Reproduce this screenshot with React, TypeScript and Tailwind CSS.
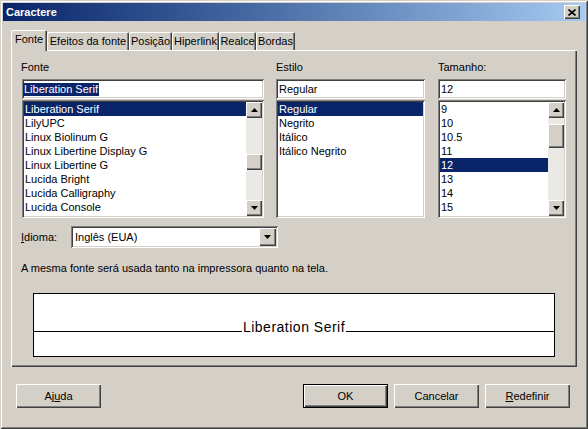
import React from "react";

const sunken =
  "shadow-[inset_1px_1px_0_#808080,inset_-1px_-1px_0_#ffffff,inset_2px_2px_0_#404040,inset_-2px_-2px_0_#d4d0c8]";
const raised =
  "shadow-[inset_1px_1px_0_#ffffff,inset_-1px_-1px_0_#404040,inset_-2px_-2px_0_#808080]";

const fonts = [
  "Liberation Serif",
  "LilyUPC",
  "Linux Biolinum G",
  "Linux Libertine Display G",
  "Linux Libertine G",
  "Lucida Bright",
  "Lucida Calligraphy",
  "Lucida Console",
];
const styles = ["Regular", "Negrito", "Itálico", "Itálico Negrito"];
const sizes = ["9", "10", "10.5", "11", "12", "13", "14", "15"];
const tabs = [
  { label: "Fonte", w: "w-[36px]" },
  { label: "Efeitos da fonte", w: "w-[82px]" },
  { label: "Posição", w: "w-[43px]" },
  { label: "Hiperlink", w: "w-[47px]" },
  { label: "Realce", w: "w-[37px]" },
  { label: "Bordas", w: "w-[39px]" },
];

function Arrow({ down }: { down?: boolean }) {
  return (
    <svg width="7" height="4" viewBox="0 0 7 4">
      <polygon points={down ? "0,0 7,0 3.5,4" : "3.5,0 7,4 0,4"} fill="#000" />
    </svg>
  );
}

function ScrollBar({ thumbTop, thumbH }: { thumbTop: number; thumbH: number }) {
  return (
    <div className="w-[16px] h-full flex flex-col bg-[#ebe9e5]">
      <div className={`h-[16px] shrink-0 bg-[#d4d0c8] flex items-center justify-center ${raised}`}>
        <Arrow />
      </div>
      <div className="flex-1">
        <div style={{ marginTop: thumbTop, height: thumbH }} className={`bg-[#d4d0c8] ${raised}`} />
      </div>
      <div className={`h-[16px] shrink-0 bg-[#d4d0c8] flex items-center justify-center ${raised}`}>
        <Arrow down />
      </div>
    </div>
  );
}

function ListBox({
  items,
  selected,
  width,
  scroll,
}: {
  items: string[];
  selected: number;
  width: string;
  scroll?: { top: number; h: number };
}) {
  return (
    <div className={`${width} h-[118px] bg-white p-[2px] flex ${sunken}`}>
      <div className="flex-1 overflow-hidden">
        {items.map((it, i) => (
          <div
            key={it}
            className={`h-[14px] leading-[14px] pl-[1px] whitespace-nowrap ${
              i === selected ? "bg-[#0a246a] text-white" : ""
            }`}
          >
            {it}
          </div>
        ))}
      </div>
      {scroll && <ScrollBar thumbTop={scroll.top} thumbH={scroll.h} />}
    </div>
  );
}

function TextBox({ width, children }: { width: string; children: React.ReactNode }) {
  return (
    <div className={`${width} h-[20px] bg-white flex items-center pl-[3px] ${sunken}`}>{children}</div>
  );
}

function Button({ children, def }: { children: React.ReactNode; def?: boolean }) {
  return (
    <div
      className={`w-[85px] h-[24px] flex items-center justify-center bg-[#d4d0c8] ${
        def ? "border border-black" : ""
      } ${raised}`}
    >
      {children}
    </div>
  );
}

export default function App() {
  return (
    <div className="w-[588px] h-[429px] bg-[#d4d0c8] p-[3px] flex flex-col text-[11px] text-black font-['Liberation_Sans',Arial,sans-serif] shadow-[inset_1px_1px_0_#d4d0c8,inset_-1px_-1px_0_#404040,inset_2px_2px_0_#ffffff,inset_-2px_-2px_0_#808080]">
      {/* title bar */}
      <div className="h-[18px] shrink-0 flex items-center pl-[3px] pr-[5px] bg-gradient-to-r from-[#0a246a] to-[#a6caf0]">
        <span className="flex-1 text-white font-bold text-[11px]">Caractere</span>
        <div className={`w-[16px] h-[14px] bg-[#d4d0c8] flex items-center justify-center ${raised}`}>
          <svg width="8" height="7" viewBox="0 0 8 7">
            <path d="M0.5 0.5 L7.5 6.5 M7.5 0.5 L0.5 6.5" stroke="#000" strokeWidth="1.6" />
          </svg>
        </div>
      </div>

      <div className="px-[8px] mt-[9px]">
        {/* tabs */}
        <div className="h-[21px] flex items-start -mb-px relative z-10">
          {tabs.map((t, i) => (
            <div
              key={t.label}
              className={`${t.w} flex items-center justify-center bg-[#d4d0c8] whitespace-nowrap rounded-t-[2px] shadow-[inset_1px_1px_0_#ffffff,inset_-1px_0_0_#404040,inset_-2px_0_0_#808080] ${
                i === 0 ? "h-[21px] pb-[2px]" : "h-[18px] mt-[2px]"
              }`}
            >
              {t.label}
            </div>
          ))}
        </div>

        {/* panel */}
        <div className={`h-[317px] pt-[9px] pl-[11px] ${raised}`}>
          <div className="flex">
            <div className="w-[242px] mr-[12px]">
              <div className="h-[14px] mb-[6px] -ml-px">Fonte</div>
              <TextBox width="w-[242px]">
                <span className="bg-[#0a246a] text-white px-px -ml-[2px] leading-[13px]">Liberation Serif</span>
              </TextBox>
              <div className="mt-px">
                <ListBox items={fonts} selected={0} width="w-[242px]" scroll={{ top: 36, h: 16 }} />
              </div>
            </div>
            <div className="w-[149px] mr-[13px]">
              <div className="h-[14px] mb-[6px]">Estilo</div>
              <TextBox width="w-[149px]">Regular</TextBox>
              <div className="mt-px">
                <ListBox items={styles} selected={0} width="w-[149px]" />
              </div>
            </div>
            <div className="w-[128px]">
              <div className="h-[14px] mb-[6px]">Tamanho:</div>
              <TextBox width="w-[128px]">12</TextBox>
              <div className="mt-px">
                <ListBox items={sizes} selected={4} width="w-[128px]" scroll={{ top: 6, h: 24 }} />
              </div>
            </div>
          </div>

          {/* language */}
          <div className="flex items-center mt-[8px] -ml-px">
            <div className="w-[50px]">
              <span className="underline">I</span>dioma:
            </div>
            <div className={`w-[207px] h-[22px] bg-white flex items-center p-[2px] ${sunken}`}>
              <span className="flex-1 pl-[2px]">Inglês (EUA)</span>
              <div className={`w-[17px] h-full bg-[#d4d0c8] flex items-center justify-center ${raised}`}>
                <Arrow down />
              </div>
            </div>
          </div>

          <div className="mt-[14px] leading-[13px] -ml-px">
            A mesma fonte será usada tanto na impressora quanto na tela.
          </div>

          {/* preview */}
          <div className="ml-[11px] mt-[18px] w-[522px] h-[64px] bg-white border border-black">
            <div className="h-[38px] flex items-end">
              <div className="flex-1 border-b border-black" />
              <span className="text-[14px] leading-[14px] tracking-[0.5px] mb-[-2px] px-px">
                Liberation Serif
              </span>
              <div className="flex-1 border-b border-black" />
            </div>
          </div>
        </div>
      </div>

      {/* buttons */}
      <div className="flex mt-[17px] pl-[13px] pr-[15px]">
        <Button>
          Aj<span className="underline">u</span>da
        </Button>
        <div className="flex-1" />
        <div className="flex gap-[6px]">
          <Button def>OK</Button>
          <Button>Cancelar</Button>
          <Button>
            <span className="underline">R</span>edefinir
          </Button>
        </div>
      </div>
    </div>
  );
}
